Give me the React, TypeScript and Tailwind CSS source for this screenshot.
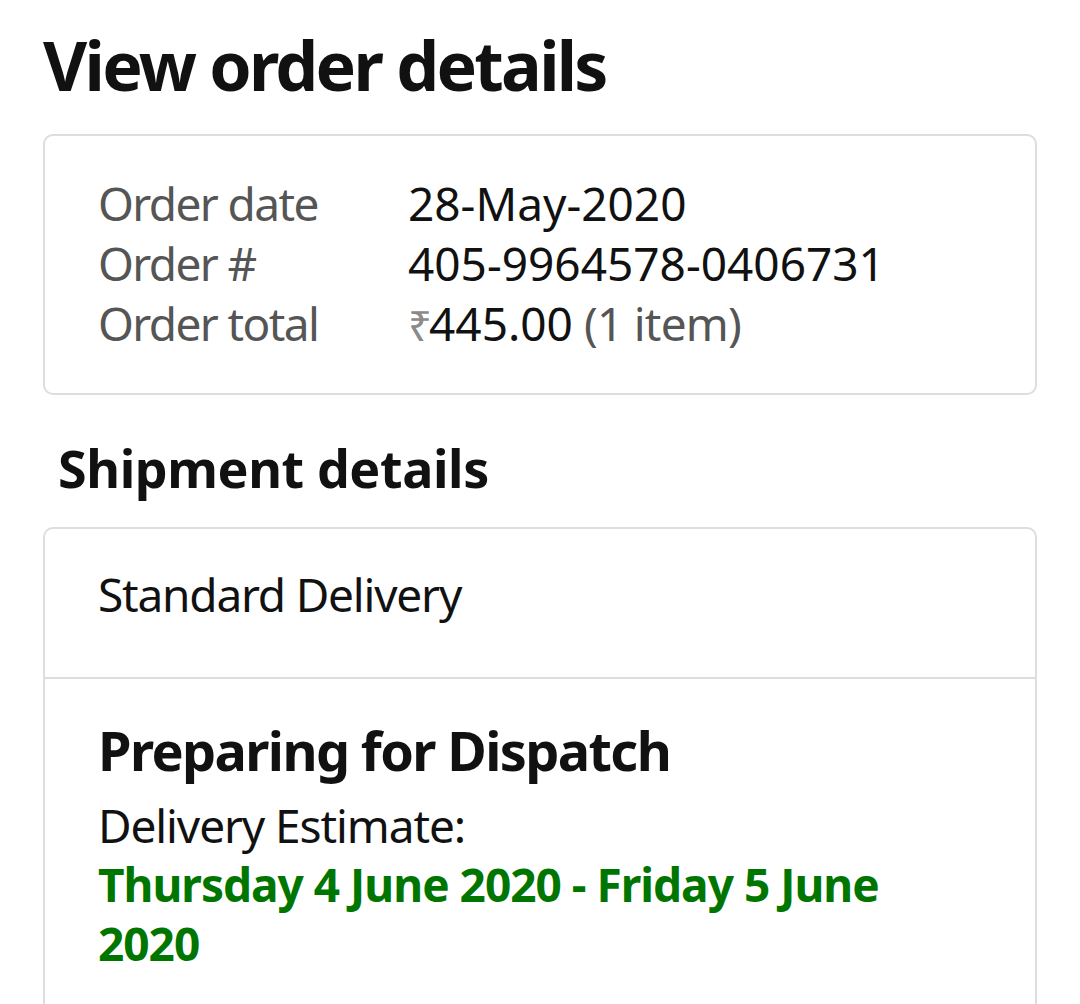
export default function App() {
  return (
    <div
      className="w-[1080px] min-h-[1004px] bg-white overflow-hidden text-[#111111]"
      style={{ fontFamily: '"Noto Sans", "Open Sans", sans-serif' }}
    >
      <div className="pt-[25px] pl-[43px]">
        <h1 className="text-[68px] leading-[80px] font-bold tracking-[-2.7px]">View order details</h1>
      </div>

      <div className="mx-[43px] mt-[29px] border-2 border-[#dddddd] rounded-[10px] pt-[37px] pb-[38px] pl-[53px]">
        <div className="grid grid-cols-[310px_1fr] text-[46px] leading-[60px]">
          <div className="text-[#555555] tracking-[-1.6px]">Order date</div>
          <div>28-May-2020</div>
          <div className="text-[#555555] tracking-[-1.6px]">Order #</div>
          <div>405-9964578-0406731</div>
          <div className="text-[#555555] tracking-[-1.6px]">Order total</div>
          <div>
            <span className="text-[#8a8a8a] text-[42px] tracking-[-3px]">₹</span>
            <span>445.00</span>
            <span className="text-[#555555] tracking-[-0.8px]"> (1 item)</span>
          </div>
        </div>
      </div>

      <div className="mt-[41px] pl-[58px]">
        <h2 className="text-[52px] leading-[64px] font-bold tracking-[-0.4px]">Shipment details</h2>
      </div>

      <div className="mx-[43px] mt-[27px] border-2 border-b-0 border-[#dddddd] rounded-t-[10px]">
        <div className="pt-[35px] pb-[53px] pl-[53px] border-b-2 border-[#dddddd] text-[46px] leading-[60px] tracking-[-1.2px]">
          Standard Delivery
        </div>
        <div className="pt-[39px] pl-[53px] pb-[40px]">
          <div className="text-[54px] leading-[64px] font-bold tracking-[-1.6px]">Preparing for Dispatch</div>
          <div className="mt-[13px] text-[46px] leading-[60px] tracking-[-1.1px]">Delivery Estimate:</div>
          <div className="text-[46px] leading-[59px] font-bold text-[#007600] tracking-[-1px]">
            Thursday 4 June 2020 - Friday 5 June
            <br />
            2020
          </div>
        </div>
      </div>
    </div>
  );
}
